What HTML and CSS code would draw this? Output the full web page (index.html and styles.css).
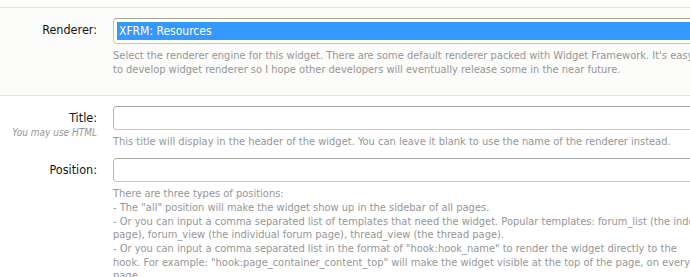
FILE: index.html
```html
<!DOCTYPE html>
<html>
<head>
<meta charset="utf-8">
<link rel="stylesheet" href="styles.css">
</head>
<body>
<div class="form">
  <div class="topstrip"></div>
  <div class="unit unit-first">
    <div class="label"><span class="label-text">Renderer:</span></div>
    <div class="control">
      <div class="selectbox"><div class="option selected">XFRM: Resources</div></div>
      <p class="explain">Select the renderer engine for this widget. There are some default renderer packed with Widget Framework. It's easy<br>to develop widget renderer so I hope other developers will eventually release some in the near future.</p>
    </div>
  </div>
  <div class="unit unit-title">
    <div class="label"><span class="label-text">Title:</span><span class="hint">You may use HTML</span></div>
    <div class="control">
      <div class="textbox"></div>
      <p class="explain">This title will display in the header of the widget. You can leave it blank to use the name of the renderer instead.</p>
    </div>
  </div>
  <div class="unit">
    <div class="label"><span class="label-text">Position:</span></div>
    <div class="control">
      <div class="textbox"></div>
      <p class="explain">There are three types of positions:<br>- The "all" position will make the widget show up in the sidebar of all pages.<br>- Or you can input a comma separated list of templates that need the widget. Popular templates: forum_list (the index<br>page), forum_view (the individual forum page), thread_view (the thread page).<br>- Or you can input a comma separated list in the format of "hook:hook_name" to render the widget directly to the<br>hook. For example: "hook:page_container_content_top" will make the widget visible at the top of the page, on every<br>page.</p>
    </div>
  </div>
</div>
</body>
</html>
```
FILE: styles.css
```css
html, body {
  margin: 0;
  padding: 0;
  background: #ffffff;
  overflow: hidden;
}
body {
  font-family: "DejaVu Sans Condensed", "DejaVu Sans", sans-serif;
  color: #141414;
}
.form {
  width: 1000px;
}
.topstrip {
  height: 7px;
  background: #fefefd;
  border-bottom: 1px solid #d9e5f0;
}
.unit {
  display: flex;
  gap: 16px;
  padding-top: 9px;
}
.unit-first {
  padding-top: 10px;
  background: #fcfcfb;
  border-bottom: 1px solid #d9e5f0;
  padding-bottom: 19px;
}
.unit-title {
  padding-top: 10px;
}
.label {
  width: 97px;
  flex: none;
  display: flex;
  flex-direction: column;
  align-items: flex-end;
}
.label-text {
  font-size: 12.5px;
  line-height: 24px;
  color: #141414;
}
.hint {
  font-size: 10px;
  font-style: italic;
  line-height: 11px;
  margin-top: -3px;
  color: #969696;
  white-space: nowrap;
}
.control {
  flex: 1;
}
.selectbox {
  height: 18px;
  padding: 3px;
  border: 1px solid #c9c5ad;
  border-top-color: #a8a48e;
  border-radius: 4px;
  background: #fffff2;
}
.option {
  height: 18px;
  line-height: 18px;
  font-size: 12px;
  padding-left: 2px;
}
.selected {
  background: #3399ff;
  color: #ffffff;
}
.textbox {
  height: 22px;
  border: 1px solid #c8c8c8;
  border-top-color: #a9a9a9;
  border-left-color: #b8b8b8;
  border-radius: 4px;
  background: #ffffff;
}
.explain {
  margin: 5px 0 0;
  font-size: 11px;
  line-height: 13.7px;
  color: #969696;
  white-space: nowrap;
}
```
